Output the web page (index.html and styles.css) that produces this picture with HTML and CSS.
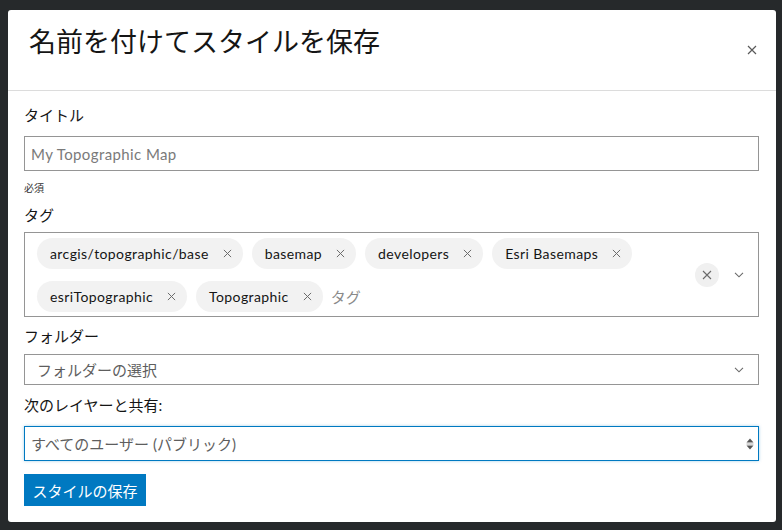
FILE: index.html
```html
<!DOCTYPE html>
<html lang="ja">
<head>
<meta charset="utf-8">
<link rel="stylesheet" href="styles.css">
</head>
<body>
<div class="dialog">
  <div class="header">
    <h1 class="title">名前を付けてスタイルを保存</h1>
    <button class="close" aria-label="閉じる">
      <svg width="10" height="10" viewBox="0 0 10 10"><path d="M1 1L9 9M9 1L1 9" stroke="#5a5a5a" stroke-width="1.2" fill="none"/></svg>
    </button>
  </div>
  <div class="body">
    <div class="label l-title">タイトル</div>
    <div class="input"><span class="placeholder">My Topographic Map</span></div>
    <div class="hint">必須</div>
    <div class="label l-tag">タグ</div>
    <div class="tagbox">
      <div class="chips">
        <span class="chip">arcgis/topographic/base<svg class="x" width="9" height="9" viewBox="0 0 10 10"><path d="M1 1L9 9M9 1L1 9" stroke="#6a6a6a" stroke-width="1.1" fill="none"/></svg></span>
        <span class="chip">basemap<svg class="x" width="9" height="9" viewBox="0 0 10 10"><path d="M1 1L9 9M9 1L1 9" stroke="#6a6a6a" stroke-width="1.1" fill="none"/></svg></span>
        <span class="chip">developers<svg class="x" width="9" height="9" viewBox="0 0 10 10"><path d="M1 1L9 9M9 1L1 9" stroke="#6a6a6a" stroke-width="1.1" fill="none"/></svg></span>
        <span class="chip">Esri Basemaps<svg class="x" width="9" height="9" viewBox="0 0 10 10"><path d="M1 1L9 9M9 1L1 9" stroke="#6a6a6a" stroke-width="1.1" fill="none"/></svg></span>
        <span class="chip">esriTopographic<svg class="x" width="9" height="9" viewBox="0 0 10 10"><path d="M1 1L9 9M9 1L1 9" stroke="#6a6a6a" stroke-width="1.1" fill="none"/></svg></span>
        <span class="chip">Topographic<svg class="x" width="9" height="9" viewBox="0 0 10 10"><path d="M1 1L9 9M9 1L1 9" stroke="#6a6a6a" stroke-width="1.1" fill="none"/></svg></span>
        <span class="tag-ph">タグ</span>
      </div>
      <div class="tag-ctrls">
        <span class="clear"><svg width="10" height="10" viewBox="0 0 10 10"><path d="M1 1L9 9M9 1L1 9" stroke="#6a6a6a" stroke-width="1.1" fill="none"/></svg></span>
        <svg class="chev" width="10" height="6" viewBox="0 0 10 6"><path d="M1 0.8L5 4.8L9 0.8" stroke="#6a6a6a" stroke-width="1.1" fill="none"/></svg>
      </div>
    </div>
    <div class="label l-folder">フォルダー</div>
    <div class="select folder">
      <span class="sel-text">フォルダーの選択</span>
      <svg class="chev" width="10" height="6" viewBox="0 0 10 6"><path d="M1 0.8L5 4.8L9 0.8" stroke="#6a6a6a" stroke-width="1.1" fill="none"/></svg>
    </div>
    <div class="label l-share">次のレイヤーと共有:</div>
    <div class="select share">
      <span class="sel-text">すべてのユーザー (パブリック)</span>
      <svg class="updown" width="8" height="12" viewBox="0 0 8 12"><path d="M4 0.5L7.5 4.5H0.5Z" fill="#555"/><path d="M4 11.5L7.5 7.5H0.5Z" fill="#555"/><path d="M0.5 6H7.5" stroke="#999" stroke-width="0.8"/></svg>
    </div>
    <button class="save">スタイルの保存</button>
  </div>
</div>
</body>
</html>
```

FILE: styles.css
```css
* { box-sizing: border-box; }
html, body { margin: 0; padding: 0; }
body {
  background: #26292b;
  width: 782px;
  height: 530px;
  overflow: hidden;
  font-family: "Lato", "Noto Sans CJK JP", sans-serif;
  color: #151515;
  padding: 10px 6px 8px 8px;
}
.dialog {
  width: 768px;
  height: 512px;
  background: #fff;
  border-radius: 3px;
  display: flex;
  flex-direction: column;
}
.header {
  height: 82px;
  border-bottom: 1px solid #dcdcdc;
  display: flex;
  align-items: flex-start;
  justify-content: space-between;
  padding: 0 19px 0 21px;
}
.title {
  margin: 0;
  padding-top: 14px;
  font-size: 27px;
  font-weight: 400;
  line-height: 36px;
  color: #151515;
}
.close {
  border: 0;
  background: none;
  padding: 0;
  margin-top: 35px;
  width: 10px;
  height: 10px;
  display: flex;
}
.body {
  padding: 14px 17px 16px 16px;
  display: flex;
  flex-direction: column;
}
.label {
  font-size: 15px;
  line-height: 20px;
  height: 20px;
  color: #151515;
}
.input {
  margin-top: 11px;
  height: 35px;
  border: 1px solid #959595;
  display: flex;
  align-items: center;
  padding-left: 6px;
}
.placeholder {
  font-size: 15px;
  letter-spacing: 0.4px;
  color: #7a7a7a;
}
.hint {
  margin-top: 7px;
  font-size: 10px;
  line-height: 20px;
  height: 20px;
  color: #333;
}
.l-tag { margin-top: 7px; }
.tagbox {
  margin-top: 7px;
  height: 85px;
  border: 1px solid #959595;
  display: flex;
  align-items: center;
  padding: 5px 14px 4px 12px;
}
.chips {
  flex: 1;
  display: flex;
  flex-wrap: wrap;
  align-content: flex-start;
  align-items: center;
  column-gap: 9px;
  row-gap: 12px;
  align-self: flex-start;
}
.chip {
  height: 31px;
  border-radius: 16px;
  background: #f2f2f2;
  display: inline-flex;
  align-items: center;
  padding: 0 11px 0 13px;
  font-size: 14px;
  letter-spacing: 0.4px;
  color: #151515;
}
.chip .x { margin-left: 14px; }
.tag-ph {
  font-size: 15px;
  color: #8a8a8a;
  margin-left: -1px;
}
.tag-ctrls {
  display: flex;
  align-items: center;
  gap: 15px;
}
.clear {
  width: 24px;
  height: 24px;
  border-radius: 50%;
  background: #f0f0f0;
  display: flex;
  align-items: center;
  justify-content: center;
}
.l-folder { margin-top: 9px; }
.select {
  display: flex;
  align-items: center;
  justify-content: space-between;
}
.select .sel-text {
  font-size: 15px;
  color: #5e5e5e;
}
.folder {
  margin-top: 8px;
  height: 31px;
  border: 1px solid #959595;
  padding: 0 14px 0 12px;
}
.l-share { margin-top: 10px; }
.share {
  margin-top: 11px;
  height: 35px;
  border: 1px solid #0079c1;
  box-shadow: 0 0 3px rgba(0, 121, 193, 0.35);
  padding: 0 4px 0 6px;
}
.save {
  margin-top: 13px;
  align-self: flex-start;
  width: 122px;
  height: 32px;
  border: 0;
  background: #0079c1;
  color: #fff;
  font-family: "Lato", "Noto Sans CJK JP", sans-serif;
  font-size: 15px;
  padding: 0;
}
```
